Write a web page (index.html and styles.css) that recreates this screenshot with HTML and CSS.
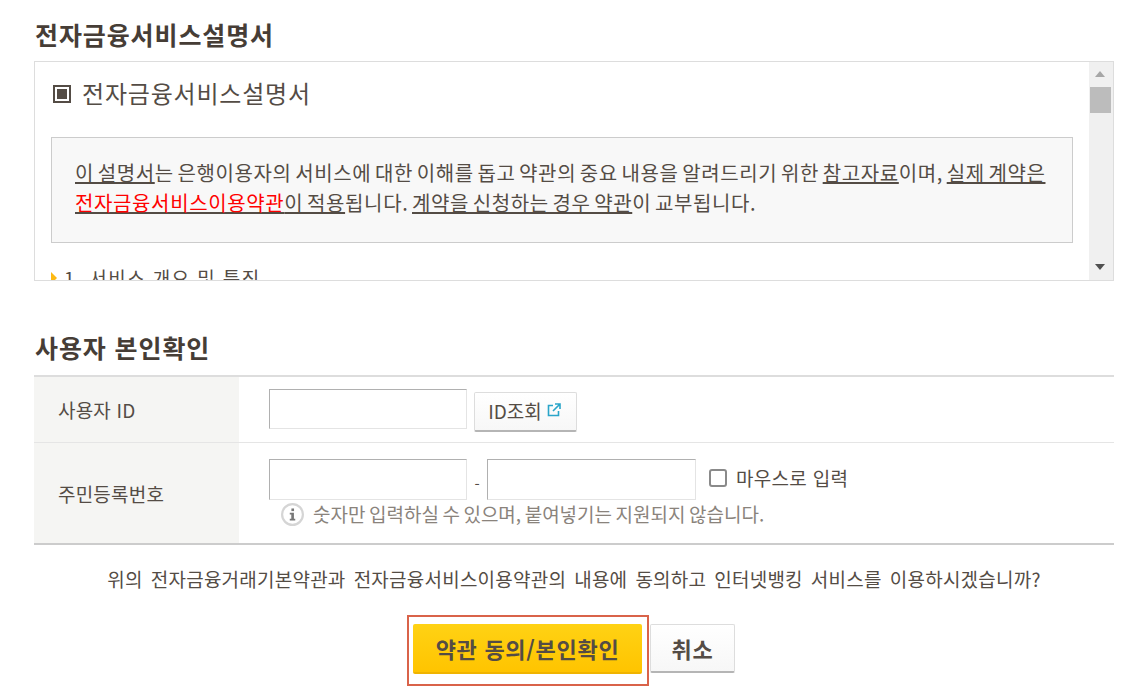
FILE: index.html
```html
<!DOCTYPE html>
<html lang="ko">
<head>
    <meta charset="UTF-8">
    <title>전자금융서비스설명서</title>
    <link rel="stylesheet" href="styles.css">
</head>
<body>
    <div class="container">
        <h2 class="sec-title first">전자금융서비스설명서</h2>
        <div class="doc-box">
            <div class="doc-body">
                <h3 class="doc-title"><span class="square"></span>전자금융서비스설명서</h3>
                <div class="notice">
                    <p><u>이 설명서</u>는 은행이용자의 서비스에 대한 이해를 돕고 약관의 중요 내용을 알려드리기 위한 <u>참고자료</u>이며, <u>실제 계약은</u><br>
                    <u><span class="red">전자금융서비스이용약관</span>이 적용</u>됩니다. <u>계약을 신청하는 경우 약관</u>이 교부됩니다.</p>
                </div>
                <h4 class="doc-sub"><span class="tri"></span>1. 서비스 개요 및 특징</h4>
            </div>
            <div class="scrollbar">
                <span class="arrow-up"></span>
                <span class="thumb"></span>
                <span class="arrow-down"></span>
            </div>
        </div>

        <h2 class="sec-title second">사용자 본인확인</h2>
        <div class="form-table">
            <div class="row row-id">
                <div class="label">사용자 ID</div>
                <div class="field">
                    <input type="text" class="inp">
                    <button type="button" class="btn-lookup">ID조회
                        <svg class="ext" width="14" height="14" viewBox="0 0 14 14" fill="none" stroke="#2aa5c9" stroke-width="1.6">
                            <path d="M6 2.5H1.5v10h10V8"/>
                            <path d="M8 1h5v5M13 1L6 8"/>
                        </svg>
                    </button>
                </div>
            </div>
            <div class="row row-reg">
                <div class="label">주민등록번호</div>
                <div class="field-stack">
                    <div class="field">
                        <input type="text" class="inp tall">
                        <span class="dash">-</span>
                        <input type="text" class="inp tall wide">
                        <label class="mouse"><input type="checkbox" class="chk">마우스로 입력</label>
                    </div>
                    <p class="hint">
                        <svg class="info" width="23" height="23" viewBox="0 0 21 21">
                            <circle cx="10.5" cy="10.5" r="9.5" fill="#fff" stroke="#d5d5d5" stroke-width="2"/>
                            <rect x="9.5" y="5" width="2.4" height="2.4" fill="#777"/>
                            <path d="M8 9h3.8v5.4H13V16H8v-1.6h1.4v-3.8H8z" fill="#777"/>
                        </svg>
                        숫자만 입력하실 수 있으며, 붙여넣기는 지원되지 않습니다.
                    </p>
                </div>
            </div>
        </div>

        <p class="agree">위의 전자금융거래기본약관과 전자금융서비스이용약관의 내용에 동의하고 인터넷뱅킹 서비스를 이용하시겠습니까?</p>

        <div class="actions">
            <div class="highlight">
                <button type="button" class="btn-confirm">약관 동의/본인확인</button>
            </div>
            <button type="button" class="btn-cancel">취소</button>
        </div>
    </div>
</body>
</html>
```

FILE: styles.css
```css
html, body {
    margin: 0;
    padding: 0;
    background: #fff;
    overflow: hidden;
}
body {
    font-family: "Noto Sans CJK KR", "Noto Sans", sans-serif;
    color: #544c45;
    font-size: 19px;
}
.container {
    width: 1080px;
    margin-left: 34px;
}
.sec-title {
    margin: 0;
    font-size: 25px;
    line-height: 32px;
    font-weight: 700;
    color: #463d36;
    letter-spacing: 0.9px;
}
.sec-title.first {
    padding-top: 18px;
    margin-bottom: 11px;
    margin-left: 1px;
}
.sec-title.second {
    margin-top: 50px;
    margin-bottom: 12px;
    margin-left: 1px;
}

.doc-box {
    display: flex;
    height: 220px;
    box-sizing: border-box;
    border: 1px solid #ddd;
    overflow: hidden;
}
.doc-body {
    flex: 1;
    padding: 0 16px 0 16px;
    overflow: hidden;
}
.doc-title {
    display: flex;
    align-items: center;
    margin: 15px 0 28px 2px;
    font-size: 24px;
    line-height: 32px;
    font-weight: 400;
    letter-spacing: 0.8px;
}
.square {
    box-sizing: border-box;
    width: 18px;
    height: 18px;
    margin: 2px 11px 0 0;
    border: 2px solid #544c45;
    background: #544c45;
    box-shadow: inset 0 0 0 2px #fff;
}
.notice {
    box-sizing: border-box;
    height: 106px;
    padding: 20px 23px;
    border: 1px solid #ccc;
    background: #f8f8f8;
}
.notice p {
    margin: 0;
    font-size: 20px;
    line-height: 30px;
    letter-spacing: 0.63px;
    word-spacing: -2.6px;
    white-space: nowrap;
}
.red {
    color: #f00;
}
.doc-sub {
    display: flex;
    align-items: center;
    margin: 22px 0 0;
    font-size: 19px;
    line-height: 26px;
    font-weight: 400;
    letter-spacing: 1.4px;
}
.tri {
    width: 0;
    height: 0;
    margin-right: 7px;
    border-left: 6px solid #fdb913;
    border-top: 6px solid transparent;
    border-bottom: 6px solid transparent;
}

.scrollbar {
    position: relative;
    flex: none;
    width: 24px;
    background: #f0f0f0;
}
.thumb {
    position: absolute;
    top: 25px;
    left: 1px;
    width: 21px;
    height: 26px;
    background: #bcbcbc;
}
.arrow-up, .arrow-down {
    position: absolute;
    left: 6px;
    width: 0;
    height: 0;
    border-left: 5.5px solid transparent;
    border-right: 5.5px solid transparent;
}
.arrow-up {
    top: 9px;
    border-bottom: 6px solid #a6a6a6;
}
.arrow-down {
    bottom: 10px;
    border-top: 6px solid #505050;
}

.form-table {
    border-top: 2px solid #ddd;
    border-bottom: 2px solid #ccc;
}
.row {
    display: flex;
}
.row-id {
    height: 65px;
    border-bottom: 1px solid #e5e5e5;
}
.row-reg {
    height: 100px;
}
.label {
    display: flex;
    align-items: center;
    flex: none;
    box-sizing: border-box;
    width: 205px;
    padding-left: 24px;
    background: #f5f5f3;
    font-size: 19px;
    letter-spacing: 0.2px;
}
.field {
    display: flex;
    align-items: flex-start;
    padding-left: 30px;
}
.row-id .field {
    padding-top: 12px;
}
.row-reg .field {
    padding-top: 16px;
}
.inp {
    box-sizing: border-box;
    width: 198px;
    height: 40px;
    margin: 0;
    padding: 0;
    border: 1px solid;
    border-color: #b0b0b0 #e4e4e4 #e4e4e4 #b0b0b0;
    background: #fff;
}
.inp.tall {
    height: 41px;
}
.inp.wide {
    width: 209px;
}
.dash {
    width: 20px;
    margin-top: 10px;
    text-align: center;
    font-size: 15px;
    line-height: 30px;
}
.btn-lookup {
    display: flex;
    align-items: center;
    justify-content: center;
    box-sizing: border-box;
    width: 103px;
    height: 40px;
    margin: 3px 0 0 7px;
    padding: 0 2px 2px 0;
    border: 1px solid #ddd;
    border-bottom: 2px solid #b5b5b5;
    border-radius: 2px;
    background: linear-gradient(#fff, #f7f7f7);
    font-family: inherit;
    font-size: 19px;
    color: #544c45;
}
.ext {
    margin: -2px 0 0 5px;
}
.mouse {
    display: flex;
    align-items: center;
    margin: 7px 0 0 13px;
    font-size: 19px;
    line-height: 24px;
    letter-spacing: 0.3px;
}
.chk {
    appearance: none;
    box-sizing: border-box;
    width: 18px;
    height: 18px;
    margin: 0 9px 0 0;
    border: 2px solid #8a8a8a;
    border-radius: 3px;
    background: #fff;
}
.hint {
    display: flex;
    align-items: center;
    margin: 2px 0 0 42px;
    font-size: 19px;
    line-height: 24px;
    word-spacing: -1.8px;
    color: #8a837c;
}
.info {
    margin-right: 9px;
}
.agree {
    margin: 20px 0 0;
    text-align: center;
    font-size: 19px;
    line-height: 28px;
    letter-spacing: 0.23px;
    word-spacing: 2.5px;
}
.actions {
    display: flex;
    align-items: flex-start;
    justify-content: center;
    margin-top: 22px;
    padding-right: 6px;
}
.highlight {
    padding: 7px 5px 10px 4px;
    border: 2px solid #d9634a;
}
.btn-confirm, .btn-cancel {
    box-sizing: border-box;
    display: block;
    margin: 0;
    font-family: inherit;
    font-size: 22px;
    font-weight: 700;
    letter-spacing: 0.7px;
    color: #544c45;
    border-radius: 2px;
}
.btn-confirm {
    width: 229px;
    height: 50px;
    border: none;
    border-bottom: 2px solid #f0b400;
    background: linear-gradient(#ffd214, #ffc400);
}
.btn-cancel {
    width: 85px;
    height: 49px;
    margin: 9px 0 0 1px;
    border: 1px solid #ddd;
    border-bottom: 2px solid #b5b5b5;
    background: linear-gradient(#fff, #f7f7f7);
}
```
